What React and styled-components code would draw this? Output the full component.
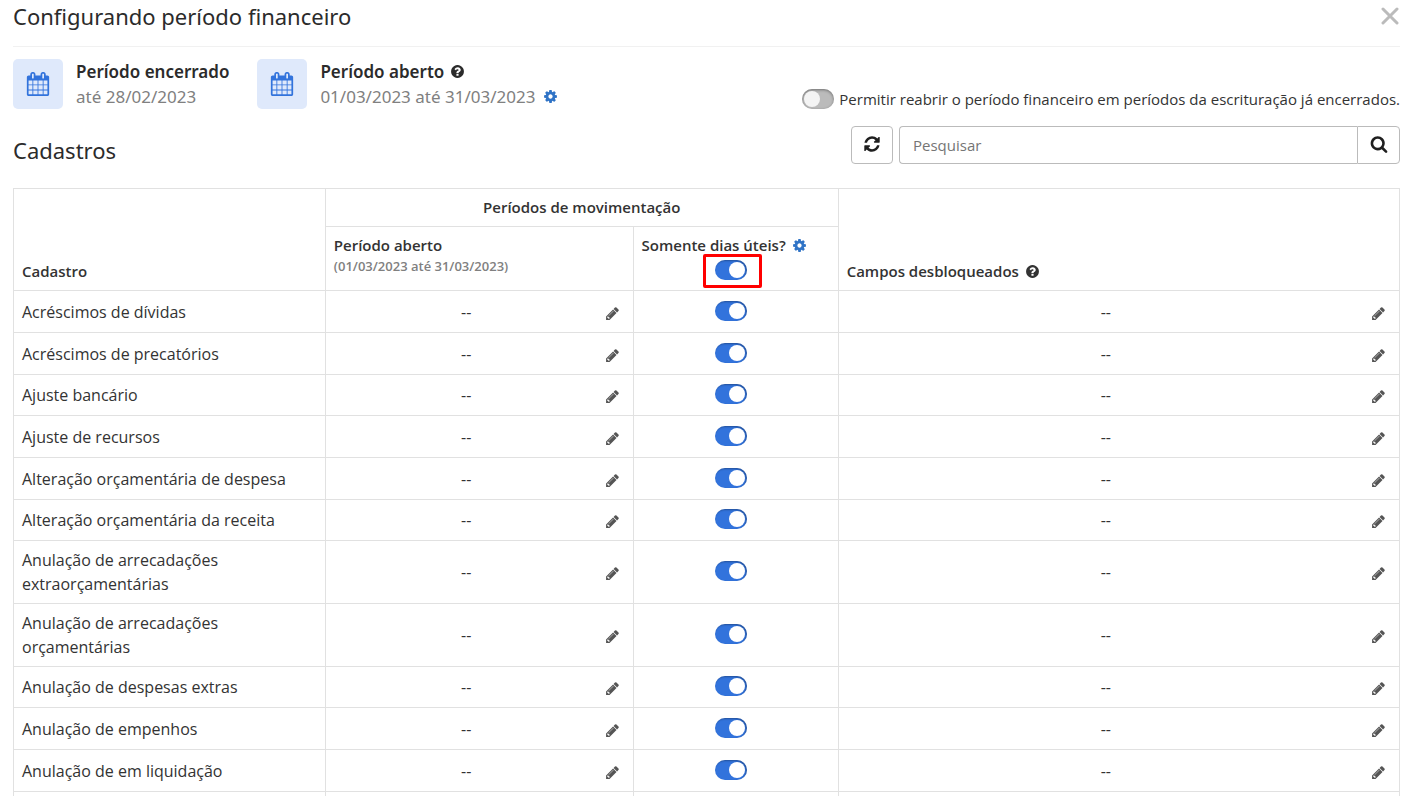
import { useState } from "react";
import styled, { createGlobalStyle } from "styled-components";

const paths = {
    calendar: "M192 1664h288v-288h-288v288zM544 1664h320v-288h-320v288zM192 1312h288v-320h-288v320zM544 1312h320v-320h-320v320zM192 928h288v-288h-288v288zM928 1664h320v-288h-320v288zM544 928h320v-288h-320v288zM1312 1664h288v-288h-288v288zM928 1312h320v-320h-320v320zM576 448v-288q0-13-9.5-22.5t-22.5-9.5h-64q-13 0-22.5 9.5t-9.5 22.5v288q0 13 9.5 22.5t22.5 9.5h64q13 0 22.5-9.5t9.5-22.5zM1312 1312h288v-320h-288v320zM928 928h320v-288h-320v288zM1312 928h288v-288h-288v288zM1344 448v-288q0-13-9.5-22.5t-22.5-9.5h-64q-13 0-22.5 9.5t-9.5 22.5v288q0 13 9.5 22.5t22.5 9.5h64q13 0 22.5-9.5t9.5-22.5zM1728 384v1280q0 52-38 90t-90 38h-1408q-52 0-90-38t-38-90v-1280q0-52 38-90t90-38h128v-96q0-66 47-113t113-47h64q66 0 113 47t47 113v96h384v-96q0-66 47-113t113-47h64q66 0 113 47t47 113v96h128q52 0 90 38t38 90z",
    question: "M1024 1376v-192q0-14-9-23t-23-9h-192q-14 0-23 9t-9 23v192q0 14 9 23t23 9h192q14 0 23-9t9-23zm256-672q0-88-55.5-163t-138.5-116-170-41q-243 0-371 213-15 24 8 42l132 100q7 6 19 6 16 0 25-12 53-68 86-92 34-24 86-24 48 0 85.5 26t37.5 59q0 38-20 61t-68 45q-63 28-115.5 86.5t-52.5 125.5v36q0 14 9 23t23 9h192q14 0 23-9t9-23q0-19 21.5-49.5t54.5-49.5q32-18 49-28.5t46-35 44.5-48 28-60.5 12.5-81zm384 192q0 209-103 385.5t-279.5 279.5-385.5 103-385.5-103-279.5-279.5-103-385.5 103-385.5 279.5-279.5 385.5-103 385.5 103 279.5 279.5 103 385.5z",
    cog: "M1152 896q0-106-75-181t-181-75-181 75-75 181 75 181 181 75 181-75 75-181zm512-109v222q0 12-8 23t-20 13l-185 28q-19 54-39 91 35 50 107 138 10 12 10 25t-9 23q-27 37-99 108t-94 71q-12 0-26-9l-138-108q-44 23-91 38-16 136-29 186-7 28-36 28h-222q-14 0-24.5-8.5t-11.5-21.5l-28-184q-49-16-90-37l-141 107q-10 9-25 9-14 0-25-11-126-114-165-168-7-10-7-23 0-12 8-23 15-21 51-66.5t54-70.5q-27-50-41-99l-183-27q-13-2-21-12.5t-8-23.5v-222q0-12 8-23t19-13l186-28q14-46 39-92-40-57-107-138-10-12-10-24 0-10 9-23 26-36 98.5-107.5t94.5-71.5q13 0 26 10l138 107q44-23 91-38 16-136 29-186 7-28 36-28h222q14 0 24.5 8.5t11.5 21.5l28 184q49 16 90 37l142-107q9-9 24-9 13 0 25 10 129 119 165 170 7 8 7 22 0 12-8 23-15 21-51 66.5t-54 70.5q26 50 41 98l183 28q13 2 21 12.5t8 23.5z",
    refresh: "M1639 1056q0 5-1 7-64 268-268 434.5t-478 166.5q-146 0-282.5-55t-243.5-157l-129 129q-19 19-45 19t-45-19-19-45v-448q0-26 19-45t45-19h448q26 0 45 19t19 45-19 45l-137 137q71 66 161 102t187 36q134 0 250-65t186-179q11-17 53-117 8-23 30-23h192q13 0 22.5 9.5t9.5 22.5zm25-800v448q0 26-19 45t-45 19h-448q-26 0-45-19t-19-45 19-45l138-138q-148-137-349-137-134 0-250 65t-186 179q-11 17-53 117-8 23-30 23h-199q-13 0-22.5-9.5t-9.5-22.5v-7q65-268 270-434.5t480-166.5q146 0 284 55.5t245 156.5l130-129q19-19 45-19t45 19 19 45z",
    search: "M1216 832q0-185-131.5-316.5t-316.5-131.5-316.5 131.5-131.5 316.5 131.5 316.5 316.5 131.5 316.5-131.5 131.5-316.5zm512 832q0 52-38 90t-90 38q-54 0-90-38l-343-342q-179 124-399 124-143 0-273.5-55.5t-225-150-150-225-55.5-273.5 55.5-273.5 150-225 225-150 273.5-55.5 273.5 55.5 225 150 150 225 55.5 273.5q0 220-124 399l343 343q37 37 37 90z",
    pencil: "M491 1536l91-91-235-235-91 91v107h128v128h107zm523-928q0-22-22-22-10 0-17 7l-542 542q-7 7-7 17 0 22 22 22 10 0 17-7l542-542q7-7 7-17zm-54-192l416 416-832 832h-416v-416zm683 96q0 53-37 90l-166 166-416-416 166-165q36-38 90-38 53 0 91 38l235 234q37 39 37 91z",
};

const cadastros = [
    "Acréscimos de dívidas",
    "Acréscimos de precatórios",
    "Ajuste bancário",
    "Ajuste de recursos",
    "Alteração orçamentária de despesa",
    "Alteração orçamentária da receita",
    "Anulação de arrecadações extraorçamentárias",
    "Anulação de arrecadações orçamentárias",
    "Anulação de despesas extras",
    "Anulação de empenhos",
    "Anulação de em liquidação",
];

function Icon({name, size}) {
    return (
        <svg viewBox="0 0 1792 1792" width={size} height={size} fill="currentColor" aria-hidden="true">
            <path d={paths[name]} />
        </svg>
    );
}

function EditableCell({label}) {
    return (
        <Cell>
            <Editable>
                <Value>--</Value>
                <EditButton aria-label={label} $color="#555555">
                    <Icon name="pencil" size={15} />
                </EditButton>
            </Editable>
        </Cell>
    );
}

function Cadastro({name}) {
    const [active, setActive] = useState(true);

    return (
        <Row>
            <Cell>{name}</Cell>
            <EditableCell label={`Editar período de ${name}`} />
            <Cell>
                <SwitchBox>
                    <Switch
                        aria-label={`Somente dias úteis: ${name}`}
                        checked={active}
                        onChange={() => setActive(!active)}
                    />
                </SwitchBox>
            </Cell>
            <EditableCell label={`Editar campos de ${name}`} />
        </Row>
    );
}

export default function App() {
    return (
        <Page>
            <GlobalStyle />
            <Header>
                <Title>Configurando período financeiro</Title>
                <CloseButton aria-label="Fechar" $color="#BBBBBB">
                    <svg viewBox="0 0 18 18" width="18" height="18" aria-hidden="true">
                        <path d="M2 2L16 16M16 2L2 16" stroke="currentColor" strokeWidth="3" strokeLinecap="round" />
                    </svg>
                </CloseButton>
            </Header>

            <Summary>
                <Period>
                    <CalendarBox><Icon name="calendar" size={24} /></CalendarBox>
                    <div>
                        <PeriodName>Período encerrado</PeriodName>
                        <PeriodDate>até 28/02/2023</PeriodDate>
                    </div>
                </Period>
                <Period>
                    <CalendarBox><Icon name="calendar" size={24} /></CalendarBox>
                    <div>
                        <PeriodName>Período aberto <Icon name="question" size={15} /></PeriodName>
                        <PeriodDate>
                            01/03/2023 até 31/03/2023
                            <IconButton aria-label="Configurar período aberto" $color="#2F73C6">
                                <Icon name="cog" size={15} />
                            </IconButton>
                        </PeriodDate>
                    </div>
                </Period>
                <Reopen>
                    <Switch />
                    Permitir reabrir o período financeiro em períodos da escrituração já encerrados.
                </Reopen>
            </Summary>

            <Toolbar>
                <Subtitle>Cadastros</Subtitle>
                <Tools>
                    <ToolButton aria-label="Atualizar"><Icon name="refresh" size={18} /></ToolButton>
                    <Search>
                        <SearchInput type="text" placeholder="Pesquisar" aria-label="Pesquisar" />
                        <SearchButton aria-label="Buscar"><Icon name="search" size={18} /></SearchButton>
                    </Search>
                </Tools>
            </Toolbar>

            <Table>
                <colgroup>
                    <Column $width="22.5%" />
                    <Column $width="22.2%" />
                    <Column $width="14.8%" />
                    <Column $width="40.5%" />
                </colgroup>
                <thead>
                    <tr>
                        <HeadCell rowSpan={2}>Cadastro</HeadCell>
                        <HeadCell colSpan={2} $align="center">Períodos de movimentação</HeadCell>
                        <HeadCell rowSpan={2}>
                            <HeadLine>Campos desbloqueados <Icon name="question" size={15} /></HeadLine>
                        </HeadCell>
                    </tr>
                    <tr>
                        <HeadCell $valign="top">
                            Período aberto
                            <Hint>(01/03/2023 até 31/03/2023)</Hint>
                        </HeadCell>
                        <HeadCell $valign="top">
                            <HeadLine>
                                Somente dias úteis?
                                <IconButton aria-label="Configurar dias úteis" $color="#2F73C6">
                                    <Icon name="cog" size={15} />
                                </IconButton>
                            </HeadLine>
                            <HeadSwitchBox>
                                <Highlight>
                                    <Switch defaultChecked aria-label="Somente dias úteis para todos" />
                                </Highlight>
                            </HeadSwitchBox>
                        </HeadCell>
                    </tr>
                </thead>
                <tbody>
                    {cadastros.map((name) => <Cadastro key={name} name={name} />)}
                    <Row>
                        <Cell />
                        <Cell />
                        <Cell />
                        <Cell />
                    </Row>
                </tbody>
            </Table>
        </Page>
    );
}

const GlobalStyle = createGlobalStyle`
    * {
        box-sizing: border-box;
    }

    body {
        margin: 0;
        background-color: #FFFFFF;
        color: #333333;
        font-family: "Open Sans", sans-serif;
        font-size: 16px;
    }

    button, input {
        font-family: inherit;
    }

    svg {
        display: block;
        flex-shrink: 0;
    }
`;

const Page = styled.main`
    height: 100vh;
    padding: 0 16px 0 13px;
    overflow: hidden;
`;

const Header = styled.header`
    display: flex;
    justify-content: space-between;
    align-items: flex-start;
    padding: 0 1px 14px 0;
    border-bottom: 1px solid #F1F1F1;
`;

const Title = styled.h1`
    margin: 0;
    color: #2B2B2B;
    font-family: "Noto Sans", sans-serif;
    font-size: 22px;
    font-weight: 400;
    line-height: 32px;
`;

const Subtitle = styled(Title).attrs({as: "h2"})`
    line-height: 28px;
`;

const IconButton = styled.button`
    display: flex;
    padding: 0;
    border: none;
    background: none;
    color: ${({$color}) => $color};
    cursor: pointer;
`;

const CloseButton = styled(IconButton)`
    padding-top: 7px;
`;

const EditButton = styled(IconButton)`
    padding-top: 3px;
`;

const Summary = styled.section`
    display: flex;
    gap: 28px;
    padding-top: 12px;
`;

const Period = styled.div`
    display: flex;
    gap: 13px;
    font-family: "Noto Sans", sans-serif;
    font-size: 17px;
    line-height: 25px;
`;

const CalendarBox = styled.div`
    display: flex;
    align-items: center;
    justify-content: center;
    width: 50px;
    height: 50px;
    border-radius: 5px;
    background-color: #DFE9FB;
    color: #3273DC;
`;

const PeriodName = styled.div`
    display: flex;
    align-items: center;
    gap: 6px;
    color: #2B2B2B;
    font-weight: 600;
`;

const PeriodDate = styled.div`
    display: flex;
    align-items: center;
    gap: 8px;
    color: #808080;
`;

const Reopen = styled.label`
    display: flex;
    align-items: center;
    align-self: flex-end;
    gap: 5px;
    margin-left: auto;
    font-size: 15px;
    line-height: 20px;
`;

const Switch = styled.input.attrs({type: "checkbox"})`
    appearance: none;
    flex-shrink: 0;
    width: 32px;
    height: 20px;
    margin: 0;
    padding: 2px;
    border-radius: 10px;
    background-color: #BBBBBB;
    box-shadow: inset 0 1px 3px rgba(0, 0, 0, .4);
    cursor: pointer;

    &::before {
        content: "";
        display: block;
        width: 16px;
        height: 16px;
        border-radius: 50%;
        background-color: #F4F4F4;
    }

    &:checked {
        background-color: #3273DC;
        box-shadow: inset -1px 1px 2px rgba(0, 0, 0, .3);
    }

    &:checked::before {
        margin-left: auto;
        background-color: #FFFFFF;
    }
`;

const Toolbar = styled.section`
    display: flex;
    justify-content: space-between;
    align-items: flex-end;
    padding: 17px 0 24px;
`;

const Tools = styled.div`
    display: flex;
    gap: 6px;
    width: 549px;
`;

const ToolButton = styled.button`
    display: flex;
    align-items: center;
    justify-content: center;
    width: 42px;
    height: 38px;
    padding: 0 0 2px;
    border: 1px solid #BBBBBB;
    border-radius: 4px;
    background-color: #FFFFFF;
    color: #1F1F1F;
    cursor: pointer;
`;

const Search = styled.div`
    display: flex;
    flex: 1;
`;

const SearchInput = styled.input`
    flex: 1;
    min-width: 0;
    height: 38px;
    padding: 0 13px;
    border: 1px solid #BBBBBB;
    border-right: none;
    border-radius: 4px 0 0 4px;
    color: #333333;
    font-size: 15px;

    &::placeholder {
        color: #757575;
    }
`;

const SearchButton = styled(ToolButton)`
    width: 43px;
    border-radius: 0 4px 4px 0;
`;

const Table = styled.table`
    width: 100%;
    border-collapse: collapse;
    table-layout: fixed;
`;

const Column = styled.col`
    width: ${({$width}) => $width};
`;

const HeadCell = styled.th`
    padding: 8px;
    border: 1px solid #E1E1E1;
    font-size: 15px;
    font-weight: 600;
    line-height: 21px;
    text-align: ${({$align}) => $align || "left"};
    vertical-align: ${({$valign}) => $valign || "bottom"};
`;

const HeadLine = styled.div`
    display: flex;
    align-items: center;
    gap: 6px;
`;

const Hint = styled.div`
    color: #808080;
    font-size: 13px;
`;

const Row = styled.tr`
    height: 42px;

    &:nth-child(3n) {
        height: 41px;
    }
`;

const Cell = styled.td`
    padding: 7px 8px;
    border: 1px solid #E1E1E1;
    line-height: 24px;
`;

const Editable = styled.div`
    display: flex;
    align-items: center;
    gap: 6px;
    padding-right: 5px;
`;

const Value = styled.span`
    flex: 1;
    text-align: center;
`;

const SwitchBox = styled.div`
    display: flex;
    justify-content: center;
    padding: 0 10px 2px 0;
`;

const HeadSwitchBox = styled(SwitchBox)`
    padding-top: 4px;
`;

const Highlight = styled.div`
    display: flex;
    position: relative;

    &::after {
        content: "";
        position: absolute;
        inset: -6px -15px -8px -12px;
        border: 3px solid #FF0000;
        border-radius: 2px;
        pointer-events: none;
    }
`;
